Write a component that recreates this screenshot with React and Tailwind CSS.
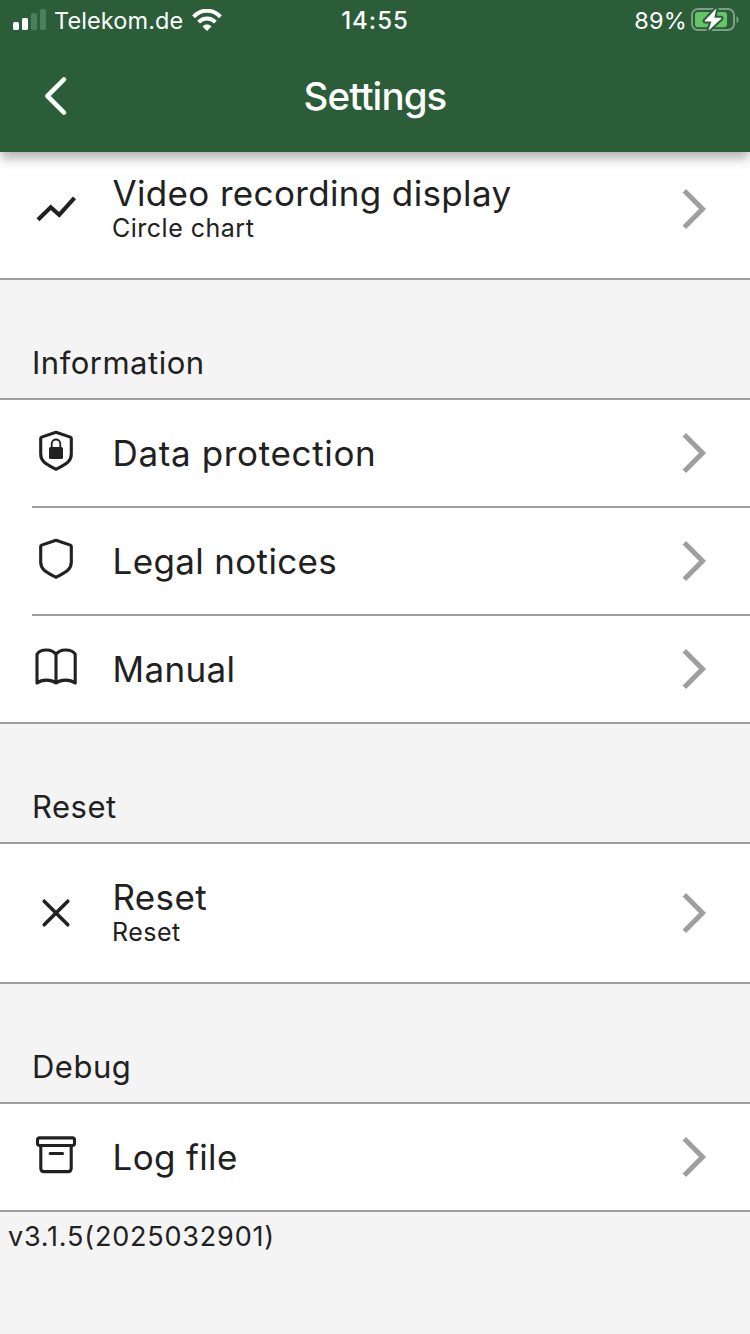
const shieldPath =
  'M24 3.3 9.6 8.1Q8.7 8.5 8.7 9.5V25C8.7 33.2 14.8 35.4 24 40.3 33.2 35.4 39.3 33.2 39.3 25V9.5Q39.3 8.5 38.4 8.1Z'

function Icon({ children }) {
  return (
    <svg viewBox="0 0 48 48" className="size-12 shrink-0" fill="none" stroke="currentColor" strokeWidth="3.1" aria-hidden="true">
      {children}
    </svg>
  )
}

const icons = {
  chart: <path strokeWidth="4.2" d="M6 34.8 18.7 22.3l8.5 7.6L42.5 12.8" />,
  lock: (
    <>
      <path strokeLinejoin="round" d={shieldPath} />
      <rect x="17" y="18" width="14" height="12" rx="1.6" fill="currentColor" stroke="none" />
      <path strokeWidth="1.8" d="M19.7 18.5V15c0-6 8.6-6 8.6 0v3.5" />
    </>
  ),
  shield: <path strokeLinejoin="round" d={shieldPath} />,
  book: (
    <path
      strokeLinejoin="round"
      d="M24 9.6C20.5 3.6 8.5 3.6 5 9.2V38C10 34.2 19 34.2 24 38 29 34.2 38 34.2 43.2 38V9.2C39.5 3.6 27.5 3.6 24 9.6ZM24 9.6V38"
    />
  ),
  close: <path strokeWidth="3.6" strokeLinecap="round" d="m12.2 12.2 23.6 23.6M35.8 12.2 12.2 35.8" />,
  archive: (
    <g>
      <rect x="5.5" y="4.9" width="37" height="7.6" rx="2.2" />
      <path d="M8.8 12.4V35.2Q8.8 38.6 12.2 38.6H35.8Q39.2 38.6 39.2 35.2V12.4" />
      <path strokeLinecap="round" d="M18.2 20.5H30.6" />
    </g>
  ),
}

const groups = [
  {
    title: 'Information',
    items: [
      { icon: 'lock', label: 'Data protection', tracking: 'tracking-[0.65px]' },
      { icon: 'shield', label: 'Legal notices' },
      { icon: 'book', label: 'Manual' },
    ],
  },
  { title: 'Reset', items: [{ icon: 'close', label: 'Reset', value: 'Reset' }] },
  { title: 'Debug', items: [{ icon: 'archive', label: 'Log file' }] },
]

function StatusBar() {
  return (
    <div className="grid h-10 grid-cols-3 items-center text-2xl leading-10">
      <div className="flex items-center pl-[13px]">
        <svg viewBox="0 0 33 21" className="mr-2 mb-0.5 h-[21px] w-[33px] shrink-0" fill="white" aria-hidden="true">
          <rect y="13" width="6" height="8" rx="1.5" />
          <rect x="9" y="9" width="6" height="12" rx="1.5" />
          <rect x="18" y="4.3" width="6" height="16.7" rx="1.5" fill="#4c7f60" />
          <rect x="27" width="6" height="21" rx="1.5" fill="#4c7f60" />
        </svg>
        <span className="w-[129px] pt-0.5 text-[23.5px] leading-[38px] tracking-[0.1px] whitespace-nowrap">Telekom.de</span>
        <svg viewBox="0 0 30 22" className="ml-[9px] h-[22px] w-[30px] shrink-0" fill="none" stroke="white" strokeWidth="4" aria-hidden="true">
          <path d="M1.6 7.8C9-.3 21-.3 28.4 7.8" />
          <path d="M6.6 13.2C11.4 8.3 18.6 8.3 23.4 13.2" />
          <path fill="white" stroke="none" d="M15 22 10.5 17.4C13 15 17 15 19.5 17.4Z" />
        </svg>
      </div>
      <div className="pt-0.5 text-center leading-[38px] font-medium tracking-[1px]">14:55</div>
      <div className="flex items-center justify-end pr-[11px]">
        <span className="mr-1 pt-0.5 text-[23.5px] leading-[38px] tracking-[0.2px]">89%</span>
        <svg viewBox="0 0 48 24" className="h-6 w-12" aria-hidden="true">
          <rect x="1" y="1" width="42" height="21" rx="6" fill="none" stroke="#7f9e88" strokeWidth="2" />
          <path fill="#7f9e88" d="M45.5 8C48.3 9.5 48.3 13.8 45.5 15.3Z" />
          <rect x="4" y="4" width="32" height="15.3" rx="3" fill="#65c466" />
          <path
            fill="white"
            stroke="#2a5d38"
            strokeWidth="4"
            paintOrder="stroke"
            strokeLinejoin="round"
            d="M25.5 .3 13.8 12.4Q13.2 13.4 14.4 13.4H20.4L17.3 22.8 30.3 10.8Q31 9.8 29.8 9.8H23.3Z"
          />
        </svg>
      </div>
    </div>
  )
}

function Row({ icon, label, value, tracking = 'tracking-[0.35px]' }) {
  return (
    <div className={`flex items-center pr-[42px] pl-8 ${value ? 'h-[138px]' : 'h-[106px]'}`}>
      <Icon>{icons[icon]}</Icon>
      <div className={`ml-8 flex-1 ${value ? 'pb-[5px]' : ''}`}>
        <div className={`pl-[0.5px] text-[35px] leading-[44px] ${tracking}`}>{label}</div>
        {value && <div className="text-[25px] leading-[27px] tracking-[0.5px]">{value}</div>}
      </div>
      <svg viewBox="0 0 26 42" className="h-[42px] w-[26px]" fill="none" stroke="#9e9e9e" strokeWidth="5" aria-hidden="true">
        <path d="M2.3 2.8 20.5 21 2.3 39.2" />
      </svg>
    </div>
  )
}

function App() {
  return (
    <div className="flex h-[1334px] w-[750px] flex-col overflow-hidden bg-[#f4f4f4] font-['Inter',sans-serif] text-[#212121]">
      <header className="relative z-10 h-[152px] shrink-0 bg-[#2a5d38] text-white shadow-[0_8px_8px_-2px_rgba(0,0,0,0.16),0_8px_12px_0_rgba(0,0,0,0.1),0_2px_20px_0_rgba(0,0,0,0.08)]">
        <StatusBar />
        <div className="grid h-28 grid-cols-[112px_1fr_112px] items-center">
          <svg viewBox="0 0 24 40" className="ml-11 h-10 w-6" fill="none" stroke="white" strokeWidth="4.6" strokeLinecap="round" strokeLinejoin="round" aria-hidden="true">
            <path d="M20 3.4 3.4 20 20 36.6" />
          </svg>
          <h1 className="pt-0.5 text-center text-[38.5px] font-medium tracking-[-0.9px]">Settings</h1>
        </div>
      </header>

      <main>
        {/* scrolled partly under the header */}
        <div className="-mt-3 border-b-2 border-[#9e9e9e] bg-white">
          <Row icon="chart" label="Video recording display" value="Circle chart" />
        </div>
        {groups.map((group) => (
          <section key={group.title}>
            <h2 className="flex h-[118px] items-end px-8 pb-[15px] text-[31px] leading-10 tracking-[0.5px]">{group.title}</h2>
            <div className="border-y-2 border-[#9e9e9e] bg-white">
              {group.items.map((item, index) => (
                <div key={item.label}>
                  {index > 0 && <div className="ml-8 h-0.5 bg-[#9e9e9e]" />}
                  <Row {...item} />
                </div>
              ))}
            </div>
          </section>
        ))}
        <p className="px-2 pt-2 text-[27px] leading-[34px] tracking-[0.8px]">v3.1.5(2025032901)</p>
      </main>
    </div>
  )
}

export default App
